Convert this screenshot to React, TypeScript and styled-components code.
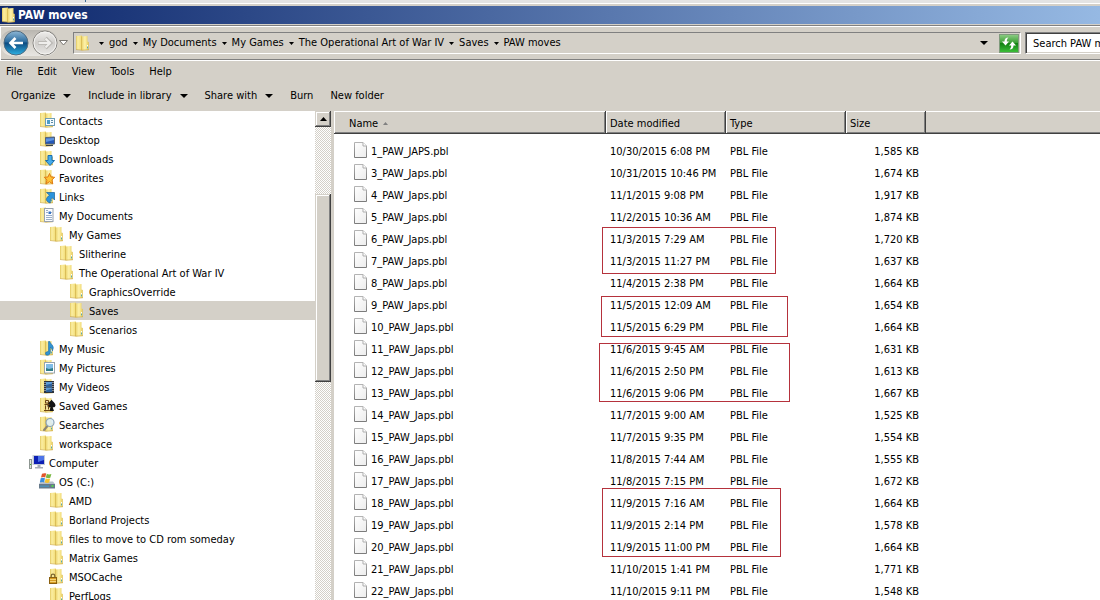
import React from 'react';
import styled, { createGlobalStyle } from 'styled-components';

const face = '#d4d0c8';

const GlobalStyle = createGlobalStyle`
  * { box-sizing: border-box; }
  body {
    margin: 0;
    background: ${face};
    color: #000;
    font: 11px/16px "DejaVu Sans Condensed", Tahoma, sans-serif;
    overflow: hidden;
  }
  button, input {
    font: inherit;
    color: inherit;
    border: 0;
    padding: 0;
    margin: 0;
    background: none;
    border-radius: 0;
  }
  a { color: inherit; text-decoration: none; }
  svg { display: block; flex: none; }
`;

const Window = styled.div`
  display: flex;
  flex-direction: column;
  height: 100vh;
  overflow: hidden;
`;

const Behind = styled.div`
  flex: none;
  height: 4px;
  padding-left: 85px;
  background: #e3e3e3;
  border-bottom: 1px solid #fff;
`;

const BehindSplit = styled.div`
  width: 1px;
  height: 2px;
  background: #3d6a94;
`;

const TitleBar = styled.header`
  flex: none;
  display: flex;
  align-items: center;
  height: 21px;
  padding-left: 1px;
  border-top: 2px solid ${face};
  border-bottom: 1px solid ${face};
  background: linear-gradient(90deg, #0d276c, #96b9e3) padding-box;
`;

const Title = styled.h1`
  margin: 0;
  font-size: 12px;
  line-height: 16px;
  font-weight: bold;
  color: #fff;
`;

const NavBar = styled.div`
  flex: none;
  display: flex;
  align-items: center;
  height: 36px;
  padding: 1px 0;
  border-top: 1px solid #808080;
  border-bottom: 1px solid #fff;
  box-shadow: inset 0 1px #fff, inset 1px 0 #fff, inset 0 -1px #808080;
`;

const NavButtons = styled.div`
  display: flex;
  align-items: center;
  gap: 3px;
  padding-left: 3px;
  border-radius: 13px;
  background: linear-gradient(#b9b6b0, #d9d6d0 60%, #e8e6e2);
`;

const HistoryButton = styled.button`
  width: 15px;
  height: 26px;
  padding-left: 1px;
  display: flex;
  align-items: center;
`;

const AddressBar = styled.div`
  flex: 1;
  min-width: 0;
  display: flex;
  align-items: center;
  height: 22px;
  padding: 0 1px;
  border: 1px solid #808080;
  border-right-color: #fff;
  border-bottom-color: #fff;
`;

const Crumbs = styled.nav`
  flex: 1;
  display: flex;
  align-items: center;
  gap: 5px;
  padding-left: 7px;
  white-space: nowrap;
`;

const Crumb = styled.span`
  display: flex;
  align-items: center;
  gap: 5px;
`;

const DropButton = styled.button`
  width: 30px;
  height: 19px;
  display: flex;
  align-items: center;
  justify-content: center;
`;

const SearchBox = styled.input`
  width: 75px;
  height: 22px;
  margin-left: 4px;
  padding-left: 7px;
  background: #fff;
  border: 1px solid #808080;
  border-right: 0;
  border-bottom-color: #fff;
  box-shadow: inset 1px 1px #404040, inset 0 -1px ${face};
  outline: 0;
  &::placeholder { color: #000; opacity: 1; }
`;

const MenuBar = styled.nav`
  flex: none;
  display: flex;
  gap: 15px;
  height: 21px;
  padding: 1px 0 0 6px;
`;

const ToolBar = styled.div`
  flex: none;
  display: flex;
  align-items: center;
  gap: 17px;
  height: 29px;
  padding: 0 0 1px 11px;
`;

const BarButton = styled.button`
  display: flex;
  align-items: center;
  gap: 8px;
  white-space: nowrap;
`;

const Body = styled.main`
  flex: 1;
  min-height: 0;
  display: flex;
`;

const TreePane = styled.nav`
  width: 315px;
  flex: none;
  overflow: hidden;
  background: #fff;
`;

const TreeItem = styled.button<{ $depth: number; $selected: boolean }>`
  display: flex;
  align-items: flex-start;
  gap: 3px;
  width: 100%;
  height: 19px;
  padding: 1px 0 0 ${p => 29 + p.$depth * 10}px;
  white-space: nowrap;
  background: ${p => (p.$selected ? face : 'transparent')};
`;

const Label = styled.span`
  padding-top: 2px;
`;

const ScrollBar = styled.div`
  width: 16px;
  flex: none;
  overflow: hidden;
  background: repeating-conic-gradient(#fff 0 25%, ${face} 0 50%) 0 0 / 2px 2px;
`;

const ScrollButton = styled.button`
  display: flex;
  align-items: center;
  justify-content: center;
  width: 16px;
  height: 16px;
  background: ${face};
  box-shadow: inset -1px -1px #404040, inset 1px 1px ${face}, inset -2px -2px #808080, inset 2px 2px #fff;
`;

const ScrollThumb = styled.div`
  height: 188px;
  margin-top: 67px;
  background: ${face};
  box-shadow: inset -1px -1px #404040, inset 1px 1px ${face}, inset -2px -2px #808080, inset 2px 2px #fff;
`;

const ListPane = styled.section`
  position: relative;
  flex: 1;
  min-width: 0;
  margin-left: 3px;
  overflow: hidden;
  background: #fff;
`;

const FileTable = styled.table`
  width: 100%;
  table-layout: fixed;
  border-collapse: separate;
  border-spacing: 0;
  tbody::before { content: ''; display: block; height: 6px; }
`;

const Col = styled.col<{ $width?: number }>`
  width: ${p => (p.$width ? `${p.$width}px` : 'auto')};
`;

const HeadCell = styled.th<{ $inset?: number }>`
  height: 23px;
  padding: 3px 0 0 ${p => p.$inset ?? 4}px;
  text-align: left;
  font-weight: normal;
  background: ${face};
  box-shadow: inset -1px -1px #404040, inset 0 1px #fff, inset 1px 0 #fff, inset -2px -2px #808080;
`;

const HeadRest = styled.td`
  background: ${face};
  box-shadow: inset 0 -1px #404040, inset 0 1px #fff, inset 0 -2px #808080;
`;

const HeadLabel = styled.span`
  display: flex;
  align-items: center;
  gap: 5px;
`;

const Cell = styled.td<{ $right?: boolean }>`
  height: 22px;
  padding: 2px 7px 0 4px;
  white-space: nowrap;
  text-align: ${p => (p.$right ? 'right' : 'left')};
`;

const NameCell = styled(Cell)`
  padding: 0 0 0 20px;
`;

const FileName = styled.span`
  display: flex;
  align-items: flex-start;
  gap: 4px;
`;

const Marker = styled.div<{ $x: number; $y: number; $w: number; $h: number }>`
  position: absolute;
  left: ${p => p.$x}px;
  top: ${p => p.$y}px;
  width: ${p => p.$w}px;
  height: ${p => p.$h}px;
  border: 1px solid #b5323c;
  pointer-events: none;
`;

const SharedDefs = styled.svg`
  position: absolute;
`;

const SmallArrow = () => (
  <svg width="5" height="3" viewBox="0 0 5 3"><path d="M0 0h5L2.500 3z" /></svg>
);
const MenuArrow = () => (
  <svg width="8" height="4" viewBox="0 0 8 4"><path d="M0 0h8L4 4z" /></svg>
);
const UpArrow = () => (
  <svg width="7" height="4" viewBox="0 0 7 4"><path d="M0 4h7L3.500 0z" /></svg>
);

type Kind =
  | 'folder' | 'contacts' | 'desktop' | 'downloads' | 'favorites' | 'links' | 'documents'
  | 'music' | 'pictures' | 'videos' | 'games' | 'searches' | 'locked' | 'computer' | 'drive';

const overlays: Partial<Record<Kind, React.ReactNode>> = {
  contacts: (
    <g>
      <rect x="6.500" y="6.500" width="9" height="7" fill="#f4fbff" stroke="#6f9db5" />
      <rect x="8" y="8" width="3" height="4" fill="#4d9cc9" />
      <path d="M12 8.500h2M12 10.500h2" stroke="#5b8ba5" />
    </g>
  ),
  desktop: (
    <g>
      <path d="M6.500 6.500l9-.5v7h-9z" fill="#2458b8" stroke="#5a6470" />
      <path d="M7 7.500l8-.5v2L7 11z" fill="#5f94e0" />
      <path d="M7 14.500h7" stroke="#3b4048" />
    </g>
  ),
  downloads: <path d="M9 5.500h4v5h2.500L11 15.500 6.500 10.500H9z" fill="#45aaea" stroke="#1b6fae" />,
  favorites: (
    <path d="M10.500 4.500l1.500 3.500 3.700.3-2.800 2.600.9 4-3.300-2.200-3.500 2.200 1-4L5.300 8.300 9 8z" fill="#ffc234" stroke="#e07a14" />
  ),
  links: <path d="M7.500 4.500H15.500v7.500l-2.200-2.200c-1.600 1.400-2.200 3-2 5.200-2-.4-3.500-1.700-4-3.500.4-1.800 1.500-3.200 3.200-4.200z" fill="#2a93dc" stroke="#176199" strokeWidth=".7" />,
  documents: (
    <g>
      <rect x="5.500" y="1.500" width="8.500" height="13" fill="#fbfcfe" stroke="#98a2ae" />
      <path d="M7 3.500h2M7 5.500h2M12 5.500h1M7 8.500h6M7 10.500h6M7 12.500h6" stroke="#9aafc9" />
      <path d="M9.500 4.500h2.500v2.500H9.500z" fill="#3673c4" />
    </g>
  ),
  music: <path d="M9.500 1.500h1.300c.3 2.300 3.700 3.500 3.500 6.500l-1 3c.2-2-1-3.300-2-3.600V12.500c0 3-4.300 3.500-4.800 1.400-.2-1.700 1.500-2.600 3-2.200z" fill="#3193d2" stroke="#1d6ca6" strokeWidth=".6" />,
  pictures: (
    <g>
      <rect x="5.500" y="3.500" width="10" height="10.500" fill="#fff" stroke="#99a4ac" />
      <rect x="7" y="5" width="7" height="7" fill="#7fbce6" />
      <path d="M7 9l3 1 4-1v3H7z" fill="#2f7d88" />
    </g>
  ),
  videos: (
    <g>
      <rect x="5" y="3" width="10" height="12" fill="#2c333c" />
      <path d="M7 4h6v4.500H7zM7 9.500h6V14H7z" fill="#5c9bd6" />
      <path d="M7 7l6-1.500v3H7zM7 12.500l6-2V14H7z" fill="#2d609b" />
      <path d="M6 4v10M14 4v10" stroke="#dfe5ea" strokeDasharray="1 1" />
    </g>
  ),
  games: (
    <g>
      <path d="M12.500 2.500c-.5 2-4.500 3.500-4.500 6 0 2 2.500 2.500 3.500 1.500L10.500 14h4.500L13.700 10.200c1.500.5 2.800-.5 2.800-2C16.500 6 13.500 4.500 12.500 2.500z" fill="#151515" />
      <path d="M6.500 3.500h3v2.500h-3zM5.500 7.500h5M6.500 8.500v4M9.500 8.500v4M5 13.500h6" fill="#f1dfae" stroke="#6b4415" />
      <path d="M8 8v5" stroke="#f1dfae" />
    </g>
  ),
  searches: (
    <g>
      <path d="M8.500 10L5 14" stroke="#8b8573" strokeWidth="2" strokeLinecap="round" />
      <circle cx="11" cy="6.500" r="4" fill="#dceefa" fillOpacity=".85" stroke="#8ba3b5" strokeWidth="1.200" />
    </g>
  ),
  locked: (
    <g>
      <path d="M2.200 9.500V8a1.800 1.800 0 0 1 3.600 0v1.500" fill="none" stroke="#7d6a33" strokeWidth="1.300" />
      <rect x=".5" y="9.500" width="7" height="6" fill="#d79d22" stroke="#8b6110" />
      <path d="M1 11.500h6M1 13.500h6" stroke="#f5d477" />
    </g>
  ),
};

const FolderShape = () => (
  <g>
    <path d="M1 1l6-.5V15L1 14.500z" fill="url(#folder-back)" />
    <path d="M6 1.500L12.500 1v5.500l1.300.5V15l-6.800.5L6 15z" fill="url(#folder-front)" />
    <path d="M1 14.500l6 .7 7-.5" fill="none" stroke="#c9a646" strokeWidth=".6" />
    <path d="M12.500 10v3.500" stroke="#fff" strokeWidth="1" />
    <path d="M12.500 11.500v2" stroke="#5ba8a0" strokeWidth="1" />
  </g>
);

const ItemIcon = ({ kind }: { kind: Kind }) => (
  <svg width="17" height="16" viewBox="0 0 17 16" aria-hidden="true">
    {kind === 'computer' && (
      <g>
        <rect x=".5" y="5.500" width="2" height="9" fill="#dfe3df" stroke="#8d9691" />
        <path d="M1 10.500h1" stroke="#45b32c" />
        <rect x="3.500" y="1" width="12.500" height="10" fill="#c3cad6" />
        <rect x="5" y="2" width="10" height="8" fill="#0c1fb4" />
        <path d="M9 2h6v4L9 8z" fill="#4d73e8" />
        <path d="M8.500 11h3v2H14v1.500H6V13h2.500z" fill="#a7adb8" />
      </g>
    )}
    {kind === 'drive' && (
      <g>
        <path d="M2 8.500h12l2 2.500H0z" fill="#b6bfca" />
        <path d="M0 11h16v4.500H0z" fill="#667a8b" />
        <path d="M1 12.500h9v1.500H1z" fill="#4d8fb5" />
        <path d="M12.500 12h2v2h-2z" fill="#56d34e" />
        <path d="M3 .8C4.500 0 6 0 7.200.5L6.200 4.500c-1.500-.8-3-.6-4.200 0z" fill="#e2562a" />
        <path d="M7.900.8c1.500.9 3 .7 4.500.1L11.300 4.700c-1.500.7-3 .6-4.500-.1z" fill="#79b842" />
        <path d="M1.700 5.300c1.500-.8 2.900-.7 4.300 0L5 9.500c-1.400-.7-2.700-.6-4.200 0z" fill="#3a8ee0" />
        <path d="M6.700 5.300c1.400.8 2.900.7 4.400.1L10.200 9.500c-1.500.7-3 .6-4.500-.2z" fill="#f6c42f" />
      </g>
    )}
    {kind !== 'computer' && kind !== 'drive' && <FolderShape />}
    {overlays[kind]}
  </svg>
);

const Gradients = () => (
  <SharedDefs width="0" height="0" aria-hidden="true">
    <defs>
      <linearGradient id="folder-back">
        <stop offset="0" stopColor="#e2c860" />
        <stop offset=".3" stopColor="#fbeea2" />
        <stop offset=".75" stopColor="#f5e284" />
        <stop offset="1" stopColor="#e4ca62" />
      </linearGradient>
      <linearGradient id="folder-front">
        <stop offset="0" stopColor="#d0af45" />
        <stop offset=".2" stopColor="#f2de80" />
        <stop offset=".5" stopColor="#fdf2ac" />
        <stop offset=".8" stopColor="#f2dc78" />
        <stop offset="1" stopColor="#dabd55" />
      </linearGradient>
      <linearGradient id="page" x2="1" y2="1">
        <stop offset="0" stopColor="#fff" />
        <stop offset="1" stopColor="#ececec" />
      </linearGradient>
      <linearGradient id="page-edge" x2="0" y2="1">
        <stop offset="0" stopColor="#b4b4b4" />
        <stop offset="1" stopColor="#7c7c7c" />
      </linearGradient>
      <linearGradient id="back-ball" x2="0" y2="1">
        <stop offset="0" stopColor="#8fb8d6" />
        <stop offset=".45" stopColor="#2b6c9f" />
        <stop offset=".5" stopColor="#0c4a80" />
        <stop offset="1" stopColor="#2fb2e4" />
      </linearGradient>
      <linearGradient id="forward-ball" x2="0" y2="1">
        <stop offset="0" stopColor="#f0efed" />
        <stop offset=".5" stopColor="#cfcdca" />
        <stop offset="1" stopColor="#e9e8e6" />
      </linearGradient>
      <linearGradient id="refresh" x2="0" y2="1">
        <stop offset="0" stopColor="#8fce86" />
        <stop offset=".45" stopColor="#3c9f35" />
        <stop offset=".5" stopColor="#128212" />
        <stop offset="1" stopColor="#3ec13a" />
      </linearGradient>
    </defs>
  </SharedDefs>
);

const PageIcon = () => (
  <svg width="13" height="16" viewBox="0 0 13 16" aria-hidden="true">
    <path d="M.5.500h8.500l3.500 3.500v11.500H.5z" fill="url(#page)" stroke="url(#page-edge)" />
    <path d="M9 .5v3.500h3.500" fill="#fff" stroke="#adadad" />
  </svg>
);

const BackIcon = () => (
  <svg width="26" height="26" viewBox="0 0 26 26">
    <circle cx="13" cy="13" r="12" fill="url(#back-ball)" stroke="#4f6b80" />
    <path d="M20 13H8M12.500 8L7.500 13l5 5" fill="none" stroke="#fff" strokeWidth="2.600" />
  </svg>
);
const ForwardIcon = () => (
  <svg width="26" height="26" viewBox="0 0 26 26">
    <circle cx="13" cy="13" r="12" fill="url(#forward-ball)" stroke="#85837f" />
    <circle cx="13" cy="13" r="11" fill="none" stroke="#f4f3f1" />
    <path d="M6 13h12M13.500 8l5 5-5 5" fill="none" stroke="#b5b3af" strokeWidth="3.600" />
    <path d="M6.500 13H18M13.500 8.500l4.500 4.500-4.500 4.500" fill="none" stroke="#efeeec" strokeWidth="2.200" />
  </svg>
);
const RefreshIcon = () => (
  <svg width="20" height="19" viewBox="0 0 20 19">
    <rect x=".5" y=".5" width="19" height="18" fill="url(#refresh)" stroke="#7f9a7c" />
    <path d="M9.500 3.500C6.800 3.500 5.500 5 5.500 7.500H3L6.500 11.500 10 7.500H7.800c0-1.700.5-3 1.700-4z" fill="#fff" />
    <path d="M10.500 15.500c2.700 0 4-1.500 4-4H17L13.500 7.500 10 11.500h2.200c0 1.700-.5 3-1.700 4z" fill="#fff" />
  </svg>
);

const crumbs = ['god', 'My Documents', 'My Games', 'The Operational Art of War IV', 'Saves', 'PAW moves'];

const tree: [string, number, Kind][] = [
  ['Contacts', 1, 'contacts'],
  ['Desktop', 1, 'desktop'],
  ['Downloads', 1, 'downloads'],
  ['Favorites', 1, 'favorites'],
  ['Links', 1, 'links'],
  ['My Documents', 1, 'documents'],
  ['My Games', 2, 'folder'],
  ['Slitherine', 3, 'folder'],
  ['The Operational Art of War IV', 3, 'folder'],
  ['GraphicsOverride', 4, 'folder'],
  ['Saves', 4, 'folder'],
  ['Scenarios', 4, 'folder'],
  ['My Music', 1, 'music'],
  ['My Pictures', 1, 'pictures'],
  ['My Videos', 1, 'videos'],
  ['Saved Games', 1, 'games'],
  ['Searches', 1, 'searches'],
  ['workspace', 1, 'folder'],
  ['Computer', 0, 'computer'],
  ['OS (C:)', 1, 'drive'],
  ['AMD', 2, 'folder'],
  ['Borland Projects', 2, 'folder'],
  ['files to move to CD rom someday', 2, 'folder'],
  ['Matrix Games', 2, 'folder'],
  ['MSOCache', 2, 'locked'],
  ['PerfLogs', 2, 'folder'],
];

const files: [string, string, string][] = [
  ['1_PAW_JAPS.pbl', '10/30/2015 6:08 PM', '1,585 KB'],
  ['3_PAW_Japs.pbl', '10/31/2015 10:46 PM', '1,674 KB'],
  ['4_PAW_Japs.pbl', '11/1/2015 9:08 PM', '1,917 KB'],
  ['5_PAW_Japs.pbl', '11/2/2015 10:36 AM', '1,874 KB'],
  ['6_PAW_Japs.pbl', '11/3/2015 7:29 AM', '1,720 KB'],
  ['7_PAW_Japs.pbl', '11/3/2015 11:27 PM', '1,637 KB'],
  ['8_PAW_Japs.pbl', '11/4/2015 2:38 PM', '1,664 KB'],
  ['9_PAW_Japs.pbl', '11/5/2015 12:09 AM', '1,654 KB'],
  ['10_PAW_Japs.pbl', '11/5/2015 6:29 PM', '1,664 KB'],
  ['11_PAW_Japs.pbl', '11/6/2015 9:45 AM', '1,631 KB'],
  ['12_PAW_Japs.pbl', '11/6/2015 2:50 PM', '1,613 KB'],
  ['13_PAW_Japs.pbl', '11/6/2015 9:06 PM', '1,667 KB'],
  ['14_PAW_Japs.pbl', '11/7/2015 9:00 AM', '1,525 KB'],
  ['15_PAW_Japs.pbl', '11/7/2015 9:35 PM', '1,554 KB'],
  ['16_PAW_Japs.pbl', '11/8/2015 7:44 AM', '1,555 KB'],
  ['17_PAW_Japs.pbl', '11/8/2015 7:15 PM', '1,672 KB'],
  ['18_PAW_Japs.pbl', '11/9/2015 7:16 AM', '1,664 KB'],
  ['19_PAW_Japs.pbl', '11/9/2015 2:14 PM', '1,578 KB'],
  ['20_PAW_Japs.pbl', '11/9/2015 11:00 PM', '1,664 KB'],
  ['21_PAW_Japs.pbl', '11/10/2015 1:41 PM', '1,771 KB'],
  ['22_PAW_Japs.pbl', '11/10/2015 9:11 PM', '1,548 KB'],
];

export default function App() {
  return (
    <Window>
      <GlobalStyle />
      <Gradients />
      <Behind><BehindSplit /></Behind>
      <TitleBar>
        <ItemIcon kind="folder" />
        <Title>PAW moves</Title>
      </TitleBar>
      <NavBar>
        <NavButtons>
          <button aria-label="Back"><BackIcon /></button>
          <button aria-label="Forward"><ForwardIcon /></button>
        </NavButtons>
        <HistoryButton aria-label="Recent pages">
          <svg width="9" height="6" viewBox="0 0 9 6">
            <path d="M.5.500h8l-4 4.500z" fill="#fff" stroke="#77746f" />
          </svg>
        </HistoryButton>
        <AddressBar>
          <ItemIcon kind="folder" />
          <Crumbs aria-label="Address">
            {crumbs.map(name => (
              <Crumb key={name}>
                <SmallArrow />
                <a href="#">{name}</a>
              </Crumb>
            ))}
          </Crumbs>
          <DropButton aria-label="Previous locations"><MenuArrow /></DropButton>
          <button aria-label="Refresh"><RefreshIcon /></button>
        </AddressBar>
        <SearchBox type="text" aria-label="Search" placeholder="Search PAW moves" />
      </NavBar>
      <MenuBar>
        {['File', 'Edit', 'View', 'Tools', 'Help'].map(name => (
          <BarButton key={name}>{name}</BarButton>
        ))}
      </MenuBar>
      <ToolBar>
        <BarButton>Organize <MenuArrow /></BarButton>
        <BarButton>Include in library <MenuArrow /></BarButton>
        <BarButton>Share with <MenuArrow /></BarButton>
        <BarButton>Burn</BarButton>
        <BarButton>New folder</BarButton>
      </ToolBar>
      <Body>
        <TreePane aria-label="Folders">
          {tree.map(([name, depth, kind]) => (
            <TreeItem key={name} $depth={depth} $selected={name === 'Saves'}>
              <ItemIcon kind={kind} />
              <Label>{name}</Label>
            </TreeItem>
          ))}
        </TreePane>
        <ScrollBar>
          <ScrollButton aria-label="Scroll up"><UpArrow /></ScrollButton>
          <ScrollThumb />
        </ScrollBar>
        <ListPane>
          <FileTable>
            <colgroup>
              <Col $width={272} />
              <Col $width={120} />
              <Col $width={120} />
              <Col $width={80} />
              <Col />
            </colgroup>
            <thead>
              <tr>
                <HeadCell $inset={15}>
                  <HeadLabel>
                    Name
                    <svg width="5" height="5" viewBox="0 0 5 5"><path d="M0 3h5L2.500 0z" fill="#808080" /></svg>
                  </HeadLabel>
                </HeadCell>
                <HeadCell>Date modified</HeadCell>
                <HeadCell>Type</HeadCell>
                <HeadCell>Size</HeadCell>
                <HeadRest />
              </tr>
            </thead>
            <tbody>
              {files.map(([name, date, size]) => (
                <tr key={name}>
                  <NameCell><FileName><PageIcon /><Label>{name}</Label></FileName></NameCell>
                  <Cell>{date}</Cell>
                  <Cell>PBL File</Cell>
                  <Cell $right>{size}</Cell>
                  <td />
                </tr>
              ))}
            </tbody>
          </FileTable>
          <Marker $x={268} $y={116} $w={174} $h={47} />
          <Marker $x={267} $y={185} $w={187} $h={41} />
          <Marker $x={265} $y={232} $w={191} $h={59} />
          <Marker $x={268} $y={377} $w={179} $h={69} />
        </ListPane>
      </Body>
    </Window>
  );
}
